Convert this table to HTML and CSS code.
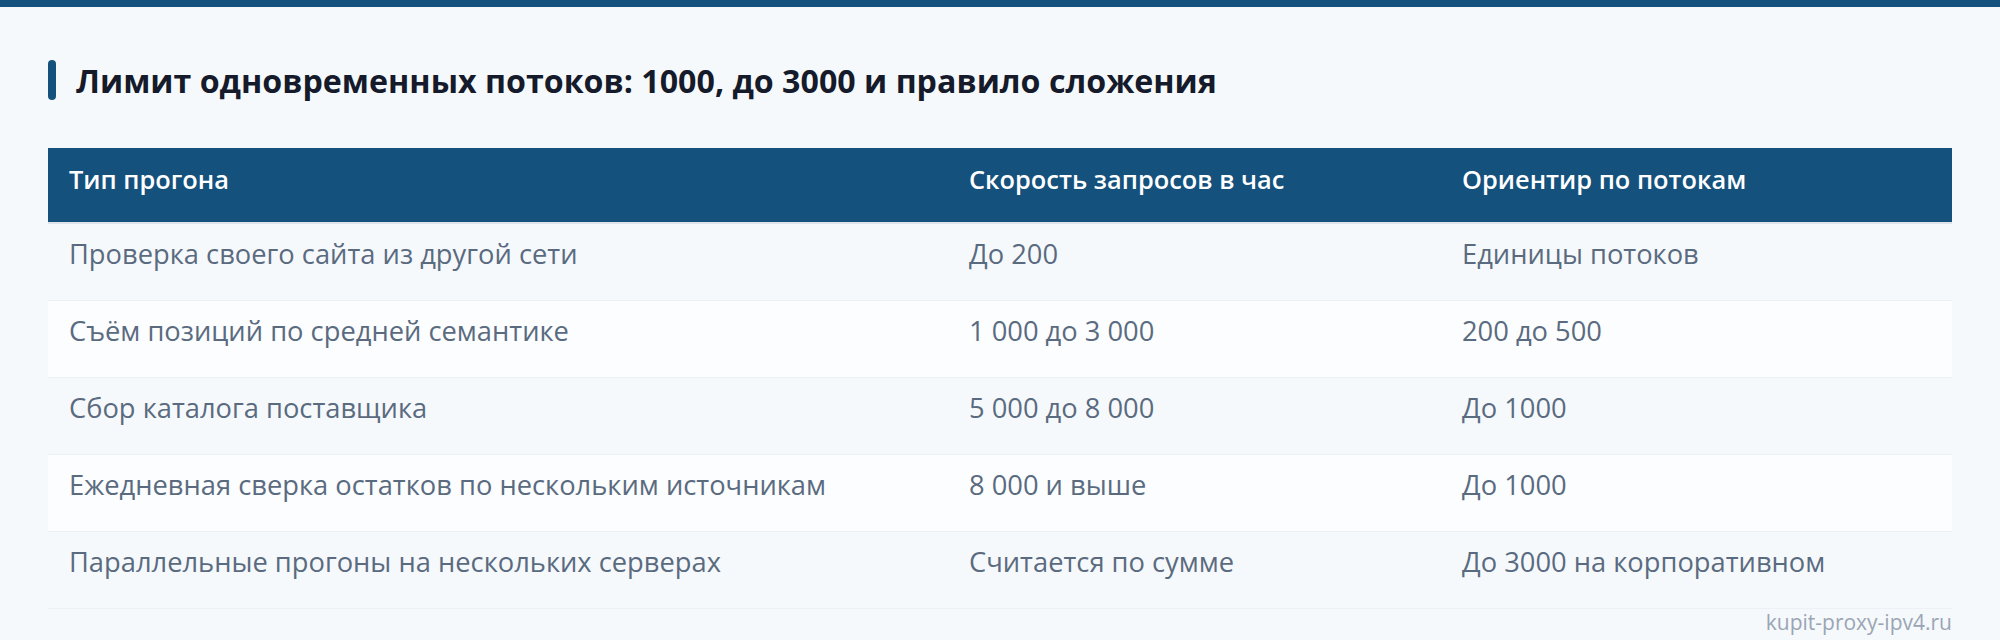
FILE: index.html
```html
<!DOCTYPE html>
<html lang="ru">
<head>
<meta charset="utf-8">
<title>Лимит одновременных потоков</title>
<link rel="stylesheet" href="styles.css">
</head>
<body>
<div class="topbar"></div>
<main class="page">
  <h2 class="title">Лимит одновременных потоков: 1000, до 3000 и правило сложения</h2>
  <table class="grid">
    <colgroup>
      <col class="c1"><col class="c2"><col class="c3">
    </colgroup>
    <thead>
      <tr><th>Тип прогона</th><th>Скорость запросов в час</th><th>Ориентир по потокам</th></tr>
    </thead>
    <tbody>
      <tr><td>Проверка своего сайта из другой сети</td><td>До 200</td><td>Единицы потоков</td></tr>
      <tr><td>Съём позиций по средней семантике</td><td>1 000 до 3 000</td><td>200 до 500</td></tr>
      <tr><td>Сбор каталога поставщика</td><td>5 000 до 8 000</td><td>До 1000</td></tr>
      <tr><td>Ежедневная сверка остатков по нескольким источникам</td><td>8 000 и выше</td><td>До 1000</td></tr>
      <tr><td>Параллельные прогоны на нескольких серверах</td><td>Считается по сумме</td><td>До 3000 на корпоративном</td></tr>
    </tbody>
  </table>
  <div class="mark">kupit-proxy-ipv4.ru</div>
</main>
</body>
</html>
```
FILE: styles.css
```css
html, body {
  margin: 0;
  padding: 0;
  background: #f5f9fc;
}
body {
  font-family: "Open Sans", "Noto Sans", sans-serif;
  color: #5a6b80;
}
.topbar {
  height: 7px;
  background: #14517d;
}
.page {
  padding: 0 48px;
}
.title {
  display: flex;
  align-items: center;
  gap: 20px;
  margin: 53px 0 48px;
  height: 40px;
  font-size: 32.2px;
  font-weight: 700;
  color: #151b2a;
}
.title::before {
  content: "";
  width: 8px;
  height: 40px;
  border-radius: 4px;
  background: #14517d;
  flex: none;
}
.grid {
  width: 1904px;
  border-collapse: collapse;
  table-layout: fixed;
}
.c1 { width: 900px; }
.c2 { width: 493px; }
.c3 { width: 511px; }
.grid th {
  background: #14517d;
  color: #ffffff;
  font-weight: 600;
  font-size: 25.4px;
  line-height: 44px;
  text-align: left;
  padding: 9px 21px 21px;
  border-bottom: 2px solid #dde4ec;
  white-space: nowrap;
}
.grid td {
  padding: 8px 21px 24px;
  line-height: 44px;
  font-size: 27.3px;
  border-bottom: 1px solid #edf1f5;
  white-space: nowrap;
}
.grid tbody tr:nth-child(odd) td { background: #f6f9fc; }
.grid tbody tr:nth-child(even) td { background: #fcfdfe; }
.mark {
  text-align: right;
  font-size: 21px;
  line-height: 26px;
  color: #9aa5b4;
}
```
